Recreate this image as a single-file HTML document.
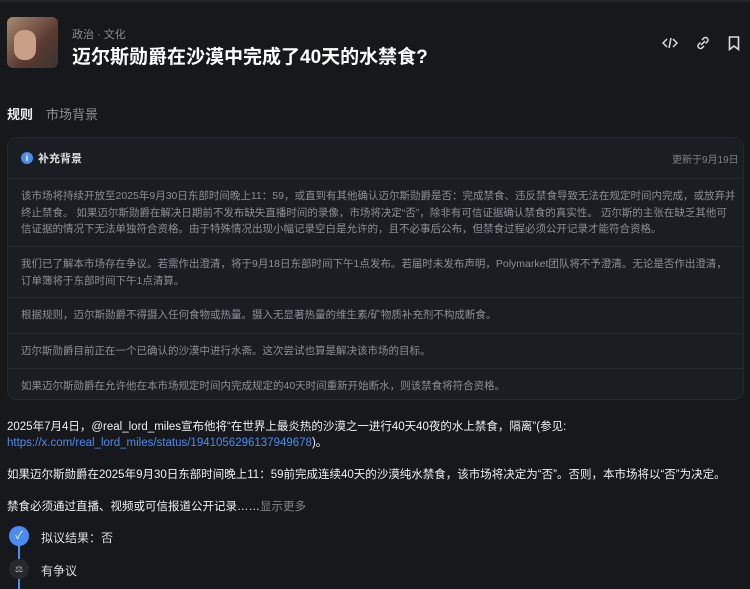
<!DOCTYPE html><html><head><meta charset="utf-8"><style>
body{margin:0;width:750px;height:589px;background:#16181c;overflow:hidden;font-family:"Liberation Sans","Noto Sans CJK SC",sans-serif;color:#e8e8e8;position:relative}
.a{position:absolute;white-space:nowrap}
.card{position:absolute;left:7px;top:137px;width:737px;height:263px;background:#1a1d22;border:1px solid #25282d;border-radius:10px;box-sizing:border-box}
.hr{position:absolute;left:8px;width:735px;height:1px;background:#272a30}
.t{position:absolute;left:21px;font-size:10.5px;line-height:16.5px;color:#8c9096;width:715px}
.b{position:absolute;left:7px;font-size:11.5px;color:#f0f0f0;white-space:nowrap}
</style></head><body>
<div class="a" style="left:0;top:0;width:750px;height:2px;background:#22252a"></div>
<div class="a" style="left:7px;top:17px;width:51px;height:51px;border-radius:6px;background:linear-gradient(135deg,#a88a70,#5a3a30 60%,#3a3430)"></div>
<div class="a" style="left:14px;top:30px;width:22px;height:30px;border-radius:10px;background:#c8a088"></div>
<div class="a" style="left:72px;top:26px;font-size:11px;color:#8a8d92">政治 · 文化</div>
<div class="a" style="left:72px;top:42px;font-size:19px;font-weight:bold;color:#fff">迈尔斯勋爵在沙漠中完成了40天的水禁食?</div>
<svg class="a" style="left:662px;top:36px" width="16" height="14" viewBox="0 0 16 14" fill="none" stroke="#ddd" stroke-width="1.5"><path d="M5 3L1 7l4 4M11 3l4 4-4 4M9 2L7 12"/></svg>
<svg class="a" style="left:695px;top:35px" width="16" height="16" viewBox="0 0 16 16" fill="none" stroke="#ddd" stroke-width="1.5"><path d="M7 5l2-2a2.5 2.5 0 013.5 3.5l-2 2M9 11l-2 2A2.5 2.5 0 013.5 9.5l2-2M6 10l4-4"/></svg>
<svg class="a" style="left:728px;top:36px" width="12" height="15" viewBox="0 0 12 15" fill="none" stroke="#ddd" stroke-width="1.6"><path d="M1.5 1h9v12.5L6 10l-4.5 3.5z"/></svg>
<div class="a" style="left:7px;top:104px;font-size:13px;font-weight:bold;color:#eee">规则</div>
<div class="a" style="left:46px;top:104px;font-size:13px;color:#8a8e94">市场背景</div>
<div class="card"></div>
<div class="a" style="left:21px;top:152px;width:12px;height:12px;border-radius:50%;background:#4a8cf0;color:#fff;font-size:9px;font-weight:bold;text-align:center;line-height:12px">i</div>
<div class="a" style="left:38px;top:150px;font-size:11px;font-weight:bold;color:#ddd">补充背景</div>
<div class="a" style="left:672px;top:151px;font-size:10px;color:#7e8288">更新于9月19日</div>
<div class="hr" style="top:178px"></div>
<div class="t" style="top:188px">该市场将持续开放至2025年9月30日东部时间晚上11：59，或直到有其他确认迈尔斯勋爵是否：完成禁食、违反禁食导致无法在规定时间内完成，或放弃并终止禁食。 如果迈尔斯勋爵在解决日期前不发布缺失直播时间的录像，市场将决定“否”，除非有可信证据确认禁食的真实性。 迈尔斯的主张在缺乏其他可信证据的情况下无法单独符合资格。由于特殊情况出现小幅记录空白是允许的，且不必事后公布，但禁食过程必须公开记录才能符合资格。</div>
<div class="hr" style="top:246px"></div>
<div class="t" style="top:256px">我们已了解本市场存在争议。若需作出澄清，将于9月18日东部时间下午1点发布。若届时未发布声明，Polymarket团队将不予澄清。无论是否作出澄清，订单簿将于东部时间下午1点清算。</div>
<div class="hr" style="top:297px"></div>
<div class="t" style="top:307px">根据规则，迈尔斯勋爵不得摄入任何食物或热量。摄入无显著热量的维生素/矿物质补充剂不构成断食。</div>
<div class="hr" style="top:333px"></div>
<div class="t" style="top:343px">迈尔斯勋爵目前正在一个已确认的沙漠中进行水斋。这次尝试也算是解决该市场的目标。</div>
<div class="hr" style="top:368px"></div>
<div class="t" style="top:378px">如果迈尔斯勋爵在允许他在本市场规定时间内完成规定的40天时间重新开始断水，则该禁食将符合资格。</div>
<div class="b" style="top:418px">2025年7月4日，@real_lord_miles宣布他将“在世界上最炎热的沙漠之一进行40天40夜的水上禁食，隔离”(参见:</div>
<div class="b" style="top:434px"><span style="color:#4a8cf0">https://x.com/real_lord_miles/status/1941056296137949678</span>)。</div>
<div class="b" style="top:466px">如果迈尔斯勋爵在2025年9月30日东部时间晚上11：59前完成连续40天的沙漠纯水禁食，该市场将决定为“否”。否则，本市场将以“否”为决定。</div>
<div class="b" style="top:498px">禁食必须通过直播、视频或可信报道公开记录……<span style="color:#80848a">显示更多</span></div>
<div class="a" style="left:18px;top:544px;width:2px;height:45px;background:#4a8cf0"></div>
<div class="a" style="left:9px;top:526px;width:20px;height:20px;border-radius:50%;background:#4a8cf0;color:#fff;font-size:11px;text-align:center;line-height:20px">✓</div>
<div class="a" style="left:41px;top:529px;font-size:12px;color:#ddd">拟议结果：否</div>
<div class="a" style="left:9px;top:559px;width:20px;height:20px;border-radius:50%;background:#25282d;color:#bbb;font-size:9px;text-align:center;line-height:20px">⚖</div>
<div class="a" style="left:41px;top:562px;font-size:12px;color:#ddd">有争议</div>
</body></html>
